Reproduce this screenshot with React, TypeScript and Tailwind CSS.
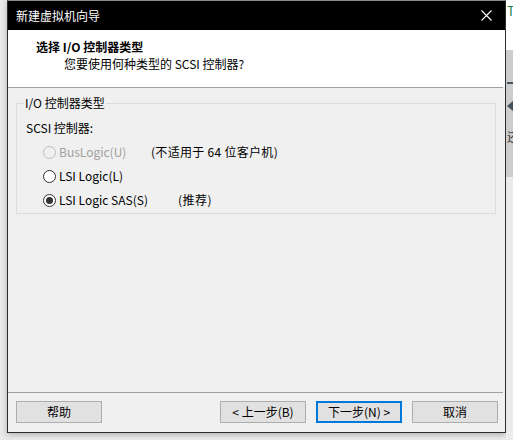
import React from 'react';

const font = { fontFamily: '"Noto Sans CJK SC", "Microsoft YaHei", sans-serif' };

const Radio: React.FC<{ checked?: boolean; disabled?: boolean }> = ({ checked, disabled }) => (
  <span
    className={`w-[13px] h-[13px] rounded-full border flex items-center justify-center shrink-0 ${
      disabled ? 'border-[#bcbcbc] bg-[#f0f0f0]' : 'border-[#333333] bg-white'
    }`}
  >
    {checked && <span className="w-[7px] h-[7px] rounded-full bg-[#333333]" />}
  </span>
);

const Btn: React.FC<{ label: string; primary?: boolean }> = ({ label, primary }) => (
  <button
    className={`w-[86px] h-[22px] bg-[#e1e1e1] text-[12px] text-black flex items-center justify-center leading-none ${
      primary ? 'border-2 border-[#0078d7]' : 'border border-[#adadad]'
    }`}
  >
    {label}
  </button>
);

export default function App() {
  return (
    <div className="w-[513px] h-[440px] bg-[#ececec] flex overflow-hidden" style={font}>
      <div className="w-[7px] h-full bg-[#eaeaea]" />

      <div className="w-[499px] h-[433px] border border-[#2b2b2b] border-t-[#8a8a8a] flex flex-col bg-[#f0f0f0] shadow-[0_2px_6px_rgba(0,0,0,0.25)]">
        {/* title bar */}
        <div className="h-[29px] bg-black flex items-center justify-between pl-2 pr-[10px] shrink-0">
          <span className="text-white text-[12px] leading-none">新建虚拟机向导</span>
          <svg width="11" height="11" viewBox="0 0 11 11" className="mr-[3px]">
            <path d="M0.5 0.5 L10.5 10.5 M10.5 0.5 L0.5 10.5" stroke="white" strokeWidth="1.1" />
          </svg>
        </div>

        {/* header */}
        <div className="h-[57px] bg-white flex flex-col shrink-0 pt-[9px]">
          <div className="pl-[28px] text-[12px] font-bold text-black leading-[16px]">选择 I/O 控制器类型</div>
          <div className="pl-[56px] text-[12px] text-black leading-[16px] mt-[1px]">您要使用何种类型的 SCSI 控制器?</div>
        </div>
        <div className="h-px bg-[#a0a0a0] mr-[2px] shrink-0" />

        {/* body */}
        <div className="flex-1 flex flex-col">
          <div className="relative mt-[15px] ml-[8px] w-[480px] h-[111px] border border-[#dcdcdc]">
            <span className="absolute -top-[9px] left-[7px] px-[1px] bg-[#f0f0f0] text-[12px] leading-[16px] text-black">
              I/O 控制器类型
            </span>
            <div className="pl-[9px] pt-[16px] flex flex-col text-[12px] text-black leading-[16px]">
              <div>SCSI 控制器:</div>
              <div className="flex items-center mt-[8px] pl-[17px] h-[16px]">
                <Radio disabled />
                <span className="ml-[3px] text-[#a0a0a0] w-[92px]">BusLogic(U)</span>
                <span className="tracking-[0.3px]">(不适用于 64 位客户机)</span>
              </div>
              <div className="flex items-center mt-[8px] pl-[17px] h-[16px]">
                <Radio />
                <span className="ml-[3px]">LSI Logic(L)</span>
              </div>
              <div className="flex items-center mt-[8px] pl-[17px] h-[16px]">
                <Radio checked />
                <span className="ml-[3px] w-[119px]">LSI Logic SAS(S)</span>
                <span className="tracking-[0.5px]">(推荐)</span>
              </div>
            </div>
          </div>

          <div className="flex-1" />
          <div className="h-px bg-[#a0a0a0] mr-[2px]" />
          <div className="h-[39px] flex items-center pl-[8px] pr-[7px] pb-[1px]">
            <Btn label="帮助" />
            <div className="flex-1" />
            <div className="flex gap-[10px]">
              <Btn label="< 上一步(B)" />
              <Btn label="下一步(N) >" primary />
              <Btn label="取消" />
            </div>
          </div>
        </div>
      </div>

      {/* background behind the dialog */}
      <div className="w-[7px] h-full flex flex-col overflow-hidden">
        <div className="h-[50px] bg-white pt-[4px] pl-[1px] text-[13px] leading-none text-[#1a7f4b]">T</div>
        <div className="h-[127px] bg-[#cdcdcd] flex flex-col pl-[1px]">
          <div className="mt-[32px] w-[6px] h-[2px] bg-[#4a5560]" />
          <div className="mt-[17px] w-0 h-0 border-y-[5px] border-y-transparent border-r-[6px] border-r-[#44505c]" />
          <div className="mt-[20px] text-[12px] leading-none text-[#333]">还</div>
        </div>
        <div className="flex-1 bg-[#ebebeb]" />
      </div>
    </div>
  );
}
